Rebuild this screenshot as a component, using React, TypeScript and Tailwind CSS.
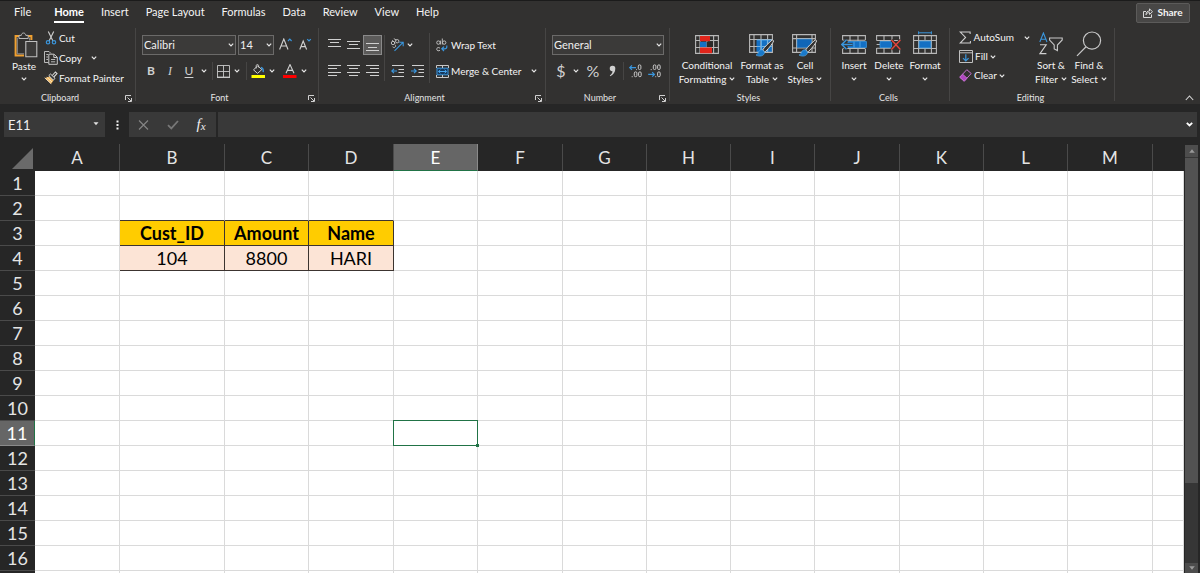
import type { ReactNode } from "react";
import clsx from "clsx";

const tabs = ["File", "Home", "Insert", "Page Layout", "Formulas", "Data", "Review", "View", "Help"];

const columns = [
  { name: "A", width: "w-[85px]" },
  { name: "B", width: "w-[105px]" },
  { name: "C", width: "w-[84px]" },
  { name: "D", width: "w-[85px]" },
  { name: "E", width: "w-[84px]" },
  { name: "F", width: "w-[85px]" },
  { name: "G", width: "w-[84px]" },
  { name: "H", width: "w-[84px]" },
  { name: "I", width: "w-[84px]" },
  { name: "J", width: "w-[85px]" },
  { name: "K", width: "w-[84px]" },
  { name: "L", width: "w-[84px]" },
  { name: "M", width: "w-[85px]" },
  { name: "", width: "" },
];

const rows = Array.from({ length: 16 }, (_, i) => i + 1);

const cells: Record<string, string> = {
  B3: "Cust_ID",
  C3: "Amount",
  D3: "Name",
  B4: "104",
  C4: "8800",
  D4: "HARI",
};

const activeCol = "E";
const activeRow = 11;

/* ---------- small pieces ---------- */

function Chevron() {
  return (
    <svg width="6" height="4" viewBox="0 0 6 4" fill="none" stroke="#e6e6e6" strokeWidth="1.2" className="shrink-0">
      <path d="M0.8 0.6 3 2.9 5.2 0.6" />
    </svg>
  );
}

function Sep({ className }: { className?: string }) {
  return <span className={clsx("w-px shrink-0 bg-[#464544]", className)} />;
}

function Tool({ label, className, children }: { label: string; className?: string; children: ReactNode }) {
  return (
    <button aria-label={label} className={clsx("flex h-5 shrink-0 items-center justify-center", className)}>
      {children}
    </button>
  );
}

function Group({ name, width, launcher, children }: { name: string; width: string; launcher?: boolean; children: ReactNode }) {
  return (
    <section aria-label={name} className={clsx("flex h-[73px] shrink-0 flex-col border-r border-[#464544]", width)}>
      <div className="flex flex-1">{children}</div>
      <div className="flex h-[6px] items-center pr-[3px] text-[9px] leading-3 text-[#e4e4e4]">
        <span className="flex-1 text-center">{name}</span>
        {launcher && (
          <button aria-label={`${name} settings`} className="flex w-3 justify-end">
            <svg width="7" height="7" viewBox="0 0 7 7" fill="none" stroke="#d0d0d0" strokeWidth="1">
              <path d="M0.5 5V0.5H6M2.5 2.5 6 6M6.5 3V6.5H3" />
            </svg>
          </button>
        )}
      </div>
    </section>
  );
}

function Dropdown({ label, value, className }: { label: string; value: string; className: string }) {
  return (
    <div className={clsx("relative h-5 shrink-0", className)}>
      <select
        aria-label={label}
        className="block h-5 w-full appearance-none border border-[#6b6a69] bg-[#3b3a39] pl-px text-[11px] leading-4 text-[#f0f0f0]"
      >
        <option>{value}</option>
      </select>
      <span className="pointer-events-none absolute inset-y-0 right-[2px] flex items-center">
        <Chevron />
      </span>
    </div>
  );
}

function BigButton({ icon, lines, width }: { icon: ReactNode; lines: string[]; width: string }) {
  return (
    <button className={clsx("flex shrink-0 flex-col items-center pt-[2px] text-[10px] leading-[14px] whitespace-nowrap", width)}>
      <span className="flex h-7 items-center">{icon}</span>
      <span>{lines[0]}</span>
      <span className="flex h-[14px] items-center gap-[3px]">
        {lines[1]}
        <Chevron />
      </span>
    </button>
  );
}

/* ---------- icons ---------- */

function PasteIcon() {
  return (
    <svg width="24" height="26" viewBox="0 0 24 26" fill="none" className="ml-[3px]">
      <path d="M5 4H1.6V23.6H10" stroke="#f0a030" strokeWidth="2" />
      <path d="M14 4H17.4V8" stroke="#f0a030" strokeWidth="2" />
      <path d="M3.3 5.6V21.8H10M15.6 5.6V8.5" stroke="#a8a8a8" strokeWidth="0.8" />
      <path d="M5 6.5V3.4H7.3C7.5 0.2 11.5 0.2 11.8 3.4H14.2V6.5Z" fill="#323130" stroke="#b8b8b8" />
      <path d="M11.8 9.5H22.8V24.8H11.8Z" fill="#3b3a39" stroke="#c0c0c0" strokeWidth="1.1" />
    </svg>
  );
}

function CutIcon() {
  return (
    <svg width="14" height="14" viewBox="0 0 14 14" fill="none">
      <path d="M4.3 0.5 8.8 9.8M9.7 0.5 5.2 9.8" stroke="#d0d0d0" strokeWidth="1.1" />
      <circle cx="4" cy="11.3" r="1.7" stroke="#3a96dd" strokeWidth="1.2" />
      <circle cx="10" cy="11.3" r="1.7" stroke="#3a96dd" strokeWidth="1.2" />
    </svg>
  );
}

function CopyIcon() {
  return (
    <svg width="14" height="14" viewBox="0 0 14 14" fill="none" stroke="#c8c8c8">
      <path d="M4.5 11.5H0.5V0.5H5L7 2.5M2.3 3.5H4M2.3 6H4M2.3 8.5H4" strokeWidth="0.9" />
      <path d="M4.8 3.2H10L13.3 6.2V13.3H4.8ZM9.8 3.5V6.5H13" />
      <path d="M7 8.5H11.2M7 10.8H11.2" strokeWidth="0.9" />
    </svg>
  );
}

function PainterIcon() {
  return (
    <svg width="14" height="14" viewBox="0 0 14 14" fill="none">
      <path d="M1 7 5.5 5.5 9.5 9.5 7 13Z" fill="#f0b860" />
      <path d="M0.7 6.8 7.2 12.8M2.8 6.2 8 11" stroke="#fff0d8" strokeWidth="0.8" />
      <path d="M4.8 4.6 6.5 3 11 7.3 9.4 9.1Z" fill="#323130" stroke="#d8d8d8" />
      <path d="M8.3 4.5 11.4 1 13 2.6 9.8 6" stroke="#d8d8d8" strokeWidth="1.1" />
    </svg>
  );
}

function LinesIcon({ lines }: { lines: [number, number, number][] }) {
  return (
    <svg width="13" height="14" viewBox="0 0 13 14" stroke="#d0d0d0" strokeWidth="1">
      {lines.map(([x1, x2, y]) => (
        <path key={y} d={`M${x1} ${y}H${x2}`} />
      ))}
    </svg>
  );
}

function BordersIcon() {
  return (
    <svg width="13" height="13" viewBox="0 0 13 13" fill="none" stroke="#c8c8c8">
      <path d="M0.5 12.5V0.5H12.5V12.5M6.5 0.5V12M0.5 6.5H12.5" strokeWidth="0.9" />
      <path d="M0 12.3H13" strokeWidth="1.4" />
    </svg>
  );
}

function BucketIcon() {
  return (
    <svg width="14" height="14" viewBox="0 0 14 14" fill="none">
      <path d="M2.5 5.8 6.8 1.8 10.8 5.6 6.5 9.4Z" stroke="#d0d0d0" />
      <path d="M5.2 4.5V1.6C5.2 0.2 7.6 0.2 7.6 1.6V3.5" stroke="#d0d0d0" strokeWidth="0.9" />
      <path d="M10 3.5C12 4 12.5 5.5 12.2 8.2" stroke="#3a96dd" strokeWidth="1.4" />
      <path d="M0.5 11H14V14H0.5Z" fill="#ffff00" />
    </svg>
  );
}

function FontColorIcon() {
  return (
    <svg width="14" height="14" viewBox="0 0 14 14" fill="none">
      <path d="M3 9.3 7 0.6 11 9.3M4.5 6.4H9.5" stroke="#d0d0d0" strokeWidth="1.1" />
      <path d="M0 11H13.5V14H0Z" fill="#ff0000" />
    </svg>
  );
}

function FontSizeIcon({ grow }: { grow?: boolean }) {
  return grow ? (
    <svg width="13" height="14" viewBox="0 0 13 14" fill="none">
      <path d="M0.6 11.5 4.8 1 9 11.5M2 8H7.6" stroke="#d0d0d0" strokeWidth="1.1" />
      <path d="M9 3 10.8 1.1 12.6 3" stroke="#3a96dd" strokeWidth="1.2" />
    </svg>
  ) : (
    <svg width="13" height="14" viewBox="0 0 13 14" fill="none">
      <path d="M0.8 11.5 4.2 3 7.6 11.5M2 8.6H6.4" stroke="#d0d0d0" strokeWidth="1.1" />
      <path d="M8.2 1.1 10 3 11.8 1.1" stroke="#3a96dd" strokeWidth="1.2" />
    </svg>
  );
}

function OrientationIcon() {
  return (
    <svg width="15" height="14" viewBox="0 0 15 14" fill="none">
      <g stroke="#c8c8c8" strokeWidth="0.9">
        <circle cx="3" cy="5" r="1.7" />
        <path d="M2.2 2.2 5.3 5.2" />
        <circle cx="7.2" cy="3.2" r="1.7" />
        <path d="M3.8 0.6 6.2 2" />
        <path d="M2.6 8.8C4.4 10.6 6.6 8.6 5.2 6.8" />
      </g>
      <path d="M4.5 12.8 12.8 4.6M9.3 4.2H13.2V8.2" stroke="#3a96dd" strokeWidth="1.1" />
    </svg>
  );
}

function IndentIcon({ increase }: { increase?: boolean }) {
  return (
    <svg width="13" height="12" viewBox="0 0 13 12" fill="none">
      <path d="M1 0.5H13M7.5 4.5H13M7.5 7.5H13M1 11.5H13" stroke="#d0d0d0" />
      {increase ? (
        <path d="M0 6H5M3 3.8 5.2 6 3 8.2" stroke="#3a96dd" strokeWidth="1.2" />
      ) : (
        <path d="M6 6H0.8M3 3.8 0.8 6 3 8.2" stroke="#3a96dd" strokeWidth="1.2" />
      )}
    </svg>
  );
}

function WrapIcon() {
  return (
    <svg width="12" height="14" viewBox="0 0 12 14" fill="none">
      <g stroke="#c8c8c8" strokeWidth="0.9">
        <circle cx="2.4" cy="4.6" r="1.7" />
        <path d="M4.4 2.6V6.5M6.3 0.5V6.5M4 10.2C2.5 8.8 0.6 9.8 0.7 11.2 0.8 12.8 2.8 13.4 4 12.2" />
        <circle cx="8.2" cy="4.6" r="1.7" />
      </g>
      <path d="M10.8 7.5V9C10.8 10.3 9.8 10.8 8.5 10.8H6M8 8.6 5.8 10.8 8 13" stroke="#3a96dd" strokeWidth="1.2" />
    </svg>
  );
}

function MergeIcon() {
  return (
    <svg width="13" height="13" viewBox="0 0 13 13" fill="none">
      <path d="M1 3.2H12V9.8H1Z" fill="#17395c" stroke="#3a96dd" />
      <path d="M0.5 3V0.5H12.5V3M0.5 10V12.5H12.5V10M6.5 0.5V3M6.5 10V12.5" stroke="#c8c8c8" />
      <path d="M2.5 6.5H10.5M4.4 4.8 2.6 6.5 4.4 8.2M8.6 4.8 10.4 6.5 8.6 8.2" stroke="#4aa8f0" />
    </svg>
  );
}

function DecimalIcon({ increase }: { increase?: boolean }) {
  return (
    <svg width="14" height="14" viewBox="0 0 14 14" fill="none">
      <g stroke="#c8c8c8" strokeWidth="1">
        {increase ? (
          <>
            <rect x="9.3" y="0.9" width="2.6" height="4.6" rx="1.2" />
            <rect x="5.3" y="7.9" width="2.6" height="4.8" rx="1.2" />
            <rect x="9.6" y="7.9" width="2.6" height="4.8" rx="1.2" />
            <path d="M2.7 12.7H3.7M7.2 5.6H8" />
          </>
        ) : (
          <>
            <rect x="5.3" y="0.9" width="2.6" height="4.6" rx="1.2" />
            <rect x="9.6" y="0.9" width="2.6" height="4.6" rx="1.2" />
            <rect x="9.6" y="7.9" width="2.6" height="4.8" rx="1.2" />
            <path d="M2.7 5.6H3.7M7.3 12.7H8.2" />
          </>
        )}
      </g>
      {increase ? (
        <path d="M7 3.6H0.9M3 1.4 0.8 3.6 3 5.8" stroke="#3a96dd" strokeWidth="1.2" />
      ) : (
        <path d="M0.2 10.4H6.3M4.2 8.2 6.4 10.4 4.2 12.6" stroke="#3a96dd" strokeWidth="1.2" />
      )}
    </svg>
  );
}

function Grid() {
  return <path d="M0.6 0.6H23.4V18.4H0.6ZM0.6 5.5H23.4M0.6 12.5H23.4M5 0.6V18.4M12 0.6V18.4M18.6 0.6V18.4" stroke="#b8b8b8" strokeWidth="1.1" />;
}

function Brush() {
  return (
    <>
      <path d="M23.5 5.8C21 7.5 15 13.5 13.6 16L15.8 18C18 16.5 23.5 10 24.6 7Z" fill="#323130" stroke="#d8d8d8" />
      <path d="M13.2 15.8C10.5 15.6 9.6 17.5 9 19.2 8.5 20.4 7.8 20.7 7 21 10 23 15.4 22.4 15.6 18Z" fill="#1979ca" stroke="#5ab0f0" strokeWidth="0.6" />
    </>
  );
}

function ConditionalIcon() {
  return (
    <svg width="24" height="19" viewBox="0 0 24 19" fill="none">
      <Grid />
      <path d="M5 1H15V6.2H5ZM5 12.6H17V18.2H5Z" fill="#e1251b" />
      <path d="M5 6.8H11.5V12H5Z" fill="#1470c4" />
      <path d="M12 6.8H18V12H12Z" fill="#2b2a29" />
    </svg>
  );
}

function FormatTableIcon() {
  return (
    <svg width="26" height="23" viewBox="0 0 26 23" fill="none" className="mt-[3px]">
      <path d="M7.5 6H23V18.4H7.5Z" fill="#1470c4" />
      <Grid />
      <path d="M8 12.5H23M12.5 6V18M18.4 6V18M8 6H23" stroke="#5ab0f0" strokeWidth="0.8" />
      <Brush />
    </svg>
  );
}

function CellStylesIcon() {
  return (
    <svg width="26" height="23" viewBox="0 0 26 23" fill="none" className="mt-[3px]">
      <path d="M0.6 0.6H23.4V18.4H0.6ZM0.6 4.6H23.4M4.6 0.6V18.4M0.6 14H23M20 0.6V18.4" stroke="#b8b8b8" strokeWidth="1.1" />
      <path d="M5.2 5.2H19.4V13.4H5.2Z" fill="#1066b8" stroke="#3a96dd" strokeWidth="0.6" />
      <Brush />
    </svg>
  );
}

function InsertIcon() {
  return (
    <svg width="26" height="19" viewBox="0 0 26 19" fill="none">
      <path d="M1.6 5V0.6H24.4V5M1.6 14V18.4H24.4V14M9 0.6V6M17 0.6V6M9 13V18.4M17 13V18.4M1.6 5.3H24.4M1.6 13.5H24.4" stroke="#b8b8b8" strokeWidth="1.1" />
      <path d="M7 6.5H25.4V12.5H7Z" fill="#1470c4" stroke="#3a96dd" strokeWidth="0.8" />
      <path d="M13 6.5V12.5M19 6.5V12.5" stroke="#5ab0f0" strokeWidth="0.8" />
      <path d="M11.5 9.5H0.8M5.5 4.8 0.8 9.5 5.5 14.2" stroke="#323130" strokeWidth="3" />
      <path d="M11.5 9.5H0.8M5.5 4.8 0.8 9.5 5.5 14.2" stroke="#3a96dd" strokeWidth="1.4" />
    </svg>
  );
}

function DeleteIcon() {
  return (
    <svg width="26" height="19" viewBox="0 0 26 19" fill="none">
      <path d="M0.6 5.5V0.6H23.6V5.5M0.6 13V18.4H23.6V13M8 0.6V5.5M16 0.6V5.5M8 13.5V18.4M16 13.5V18.4M0.6 5.5H23.6M0.6 13.3H16" stroke="#b8b8b8" strokeWidth="1.1" />
      <path d="M0.6 9.5H4" stroke="#b8b8b8" />
      <path d="M4 6.5H15.5V12.5H4Z" fill="#1470c4" stroke="#3a96dd" strokeWidth="0.8" />
      <path d="M15.5 5 24.4 14.5M24.4 5 15.5 14.5" stroke="#323130" strokeWidth="3" />
      <path d="M15.5 5 24.4 14.5M24.4 5 15.5 14.5" stroke="#e8453c" strokeWidth="1.3" />
    </svg>
  );
}

function FormatIcon() {
  return (
    <svg width="24" height="23" viewBox="0 0 24 23" fill="none" className="mb-[3px]">
      <path d="M5.6 1.8H18.4M5.6 0.3V3.3M18.4 0.3V3.3" stroke="#3a96dd" />
      <path d="M0.6 4.6H23.4V22.4H0.6ZM0.6 9.5H23.4M0.6 17.5H23.4M5.6 4.6V22.4M18.4 4.6V22.4M12 4.6V9M12 18V22.4" stroke="#b8b8b8" strokeWidth="1.1" />
      <path d="M6.2 10.2H17.8V16.8H6.2Z" fill="#1470c4" stroke="#3a96dd" />
    </svg>
  );
}

function SumIcon() {
  return (
    <svg width="13" height="13" viewBox="0 0 13 13" fill="none" stroke="#d0d0d0" strokeWidth="1.1">
      <path d="M11.5 3V0.8H1.2L6.8 6.4 1.2 12.2H11.8V10" />
    </svg>
  );
}

function FillIcon() {
  return (
    <svg width="14" height="13" viewBox="0 0 14 13" fill="none">
      <path d="M0.5 0.5H13.5V12.5H0.5ZM0.5 2.8H13.5" stroke="#c0c0c0" />
      <path d="M6.8 4.2V11M4 8.2 6.8 11 9.6 8.2" stroke="#3a96dd" strokeWidth="1.2" />
    </svg>
  );
}

function ClearIcon() {
  return (
    <svg width="13" height="13" viewBox="0 0 13 13" fill="none" stroke="#c26fcd">
      <path d="M7.8 0.7 12.2 4.5 5.2 12.2 0.8 8.2Z" />
      <path d="M3.6 5.2 8 9.2 5.2 12.2 0.8 8.2Z" fill="#b146c2" />
    </svg>
  );
}

function SortIcon() {
  return (
    <svg width="24" height="24" viewBox="0 0 24 24" fill="none">
      <path d="M0.8 10 4.4 1 8 10M2 7.2H6.8" stroke="#3a96dd" strokeWidth="1.1" />
      <path d="M1 12.8H7.2L1 21.6H7.4" stroke="#d0d0d0" strokeWidth="1.1" />
      <path d="M10.6 6H23.2V8L18.4 13V18.6L15.2 17V13L10.6 8Z" stroke="#c8c8c8" strokeWidth="1.1" />
    </svg>
  );
}

function FindIcon() {
  return (
    <svg width="26" height="26" viewBox="0 0 26 26" fill="none" stroke="#c8c8c8" strokeWidth="1.2">
      <circle cx="16" cy="9.6" r="8.6" />
      <path d="M9.8 16 1 24.8" />
    </svg>
  );
}

/* ---------- ribbon ---------- */

function Ribbon() {
  return (
    <div className="flex items-start pt-[4px]">
      <Group name="Clipboard" width="w-[136px]" launcher>
        <button className="flex w-10 flex-col items-center pt-1 pl-2 text-[10px] leading-[14px]">
          <PasteIcon />
          <span className="pt-px">Paste</span>
          <span className="flex h-3 items-center">
            <Chevron />
          </span>
        </button>
        <div className="flex flex-col pl-1 text-[10px] leading-5">
          <button className="flex h-5 items-center gap-px">
            <CutIcon /> Cut
          </button>
          <button className="flex h-5 items-center gap-px">
            <CopyIcon /> Copy
            <span className="pl-2">
              <Chevron />
            </span>
          </button>
          <button className="flex h-5 items-center gap-px whitespace-nowrap">
            <PainterIcon /> Format Painter
          </button>
        </div>
      </Group>

      <Group name="Font" width="w-[183px]" launcher>
        <div className="flex flex-col gap-[6px] pt-[7px] pl-[6px]">
          <div className="flex items-center">
            <Dropdown label="Font" value="Calibri" className="mr-[2px] w-[94px]" />
            <Dropdown label="Font size" value="14" className="w-9" />
            <Tool label="Increase font size" className="w-[22px]">
              <FontSizeIcon grow />
            </Tool>
            <Tool label="Decrease font size" className="w-[18px]">
              <FontSizeIcon />
            </Tool>
          </div>
          <div className="flex items-center text-[12px] text-[#d0d0d0]">
            <Tool label="Bold" className="w-[18px] font-bold">B</Tool>
            <Tool label="Italic" className="w-5 font-['Liberation_Serif'] italic">I</Tool>
            <Tool label="Underline" className="w-[18px] underline underline-offset-2">U</Tool>
            <Tool label="Underline style" className="w-3">
              <Chevron />
            </Tool>
            <Sep className="mx-[2px] h-[18px]" />
            <Tool label="Borders" className="w-4">
              <BordersIcon />
            </Tool>
            <Tool label="Border style" className="w-3">
              <Chevron />
            </Tool>
            <Sep className="mx-[3px] h-[18px]" />
            <Tool label="Fill colour" className="w-4">
              <BucketIcon />
            </Tool>
            <Tool label="Fill colour list" className="w-3">
              <Chevron />
            </Tool>
            <Tool label="Font colour" className="ml-1 w-4">
              <FontColorIcon />
            </Tool>
            <Tool label="Font colour list" className="w-3">
              <Chevron />
            </Tool>
          </div>
        </div>
      </Group>

      <Group name="Alignment" width="w-[227px]" launcher>
        <div className="flex flex-col gap-[6px] pt-[7px] pl-[5px]">
          <div className="flex">
            <Tool label="Top align" className="w-5">
              <LinesIcon lines={[[0, 13, 1.5], [2, 11, 4.5], [0, 13, 8.5]]} />
            </Tool>
            <Tool label="Middle align" className="w-[19px]">
              <LinesIcon lines={[[0, 13, 3.5], [2, 11, 6.5], [0, 13, 10.5]]} />
            </Tool>
            <Tool label="Bottom align" className="w-[19px] border border-[#8a8a8a] bg-[#5c5b5a]">
              <LinesIcon lines={[[0, 13, 5.5], [2, 11, 9.5], [0, 13, 12.5]]} />
            </Tool>
          </div>
          <div className="flex">
            <Tool label="Align left" className="w-5">
              <LinesIcon lines={[[0, 13, 1.5], [0, 9, 4.5], [0, 13, 8.5], [0, 9, 11.5]]} />
            </Tool>
            <Tool label="Centre" className="w-[19px]">
              <LinesIcon lines={[[0, 13, 1.5], [2, 11, 4.5], [0, 13, 8.5], [2, 11, 11.5]]} />
            </Tool>
            <Tool label="Align right" className="w-[19px]">
              <LinesIcon lines={[[0, 13, 1.5], [4, 13, 4.5], [0, 13, 8.5], [4, 13, 11.5]]} />
            </Tool>
          </div>
        </div>
        <Sep className="mt-[7px] mr-1 ml-[2px] h-[46px]" />
        <div className="flex flex-col gap-[6px] pt-[7px]">
          <div className="flex">
            <Tool label="Orientation" className="w-4">
              <OrientationIcon />
            </Tool>
            <Tool label="Orientation list" className="w-[10px]">
              <Chevron />
            </Tool>
          </div>
          <div className="flex gap-1">
            <Tool label="Decrease indent" className="w-4">
              <IndentIcon />
            </Tool>
            <Tool label="Increase indent" className="w-4">
              <IndentIcon increase />
            </Tool>
          </div>
        </div>
        <Sep className="mt-[5px] mr-[6px] ml-1 h-[50px]" />
        <div className="flex flex-col gap-[6px] pt-[7px] text-[10px] whitespace-nowrap">
          <button className="flex h-5 items-center gap-[3px]">
            <WrapIcon /> Wrap Text
          </button>
          <button className="flex h-5 items-center gap-[2px]">
            <MergeIcon /> Merge &amp; Center
            <span className="pl-2">
              <Chevron />
            </span>
          </button>
        </div>
      </Group>

      <Group name="Number" width="w-[124px]" launcher>
        <div className="flex flex-col gap-[6px] pt-[7px] pl-[6px]">
          <Dropdown label="Number format" value="General" className="w-[112px]" />
          <div className="flex items-center text-[16px] text-[#d0d0d0]">
            <Tool label="Accounting format" className="w-[18px]">$</Tool>
            <Tool label="Currency list" className="w-3">
              <Chevron />
            </Tool>
            <Tool label="Percent style" className="w-[22px]">%</Tool>
            <Tool label="Comma style" className="w-4">
              <svg width="7" height="12" viewBox="0 0 7 12" fill="#d0d0d0">
                <path d="M3.4 0.8A2.8 2.8 0 0 1 6.3 3.8C6.3 7.4 4.2 9.8 1.2 11.2L0.8 10.4C2.6 9.2 3.4 7.8 3.5 6.2A2.7 2.7 0 1 1 3.4 0.8Z" />
              </svg>
            </Tool>
            <Sep className="mx-[3px] h-[18px]" />
            <Tool label="Increase decimal" className="w-[18px]">
              <DecimalIcon increase />
            </Tool>
            <Tool label="Decrease decimal" className="w-[19px]">
              <DecimalIcon />
            </Tool>
          </div>
        </div>
      </Group>

      <Group name="Styles" width="w-[161px]">
        <BigButton icon={<ConditionalIcon />} lines={["Conditional", "Formatting"]} width="ml-[7px] w-[60px]" />
        <BigButton icon={<FormatTableIcon />} lines={["Format as", "Table"]} width="w-[50px]" />
        <BigButton icon={<CellStylesIcon />} lines={["Cell", "Styles"]} width="w-9" />
      </Group>

      <Group name="Cells" width="w-[119px]">
        <BigButton icon={<InsertIcon />} lines={["Insert", ""]} width="ml-[6px] w-[34px]" />
        <BigButton icon={<DeleteIcon />} lines={["Delete", ""]} width="w-9" />
        <BigButton icon={<FormatIcon />} lines={["Format", ""]} width="w-9" />
      </Group>

      <Group name="Editing" width="w-[165px]">
        <div className="flex w-20 flex-col pl-[9px] text-[10px]">
          <button className="flex h-[19px] items-center gap-[2px]">
            <SumIcon /> AutoSum
            <span className="pl-2">
              <Chevron />
            </span>
          </button>
          <button className="flex h-[19px] items-center gap-[2px]">
            <FillIcon /> Fill <Chevron />
          </button>
          <button className="flex h-[19px] items-center gap-[2px]">
            <ClearIcon /> Clear <Chevron />
          </button>
        </div>
        <BigButton icon={<SortIcon />} lines={["Sort &", "Filter"]} width="ml-[2px] w-[38px]" />
        <BigButton icon={<FindIcon />} lines={["Find &", "Select"]} width="w-[38px]" />
      </Group>

      <button aria-label="Collapse the ribbon" className="mt-[67px] mr-[6px] ml-auto">
        <svg width="9" height="6" viewBox="0 0 9 6" fill="none" stroke="#d8d8d8" strokeWidth="1.1">
          <path d="M0.8 5 4.5 1 8.2 5" />
        </svg>
      </button>
    </div>
  );
}

function FormulaBar() {
  return (
    <div className="flex h-[25px] items-stretch">
      <div className="relative ml-1 w-[101px] bg-[#393939]">
        <input
          aria-label="Name box"
          defaultValue="E11"
          className="h-full w-full bg-transparent pl-1 text-[13px] text-[#f0f0f0] outline-none"
        />
        <svg width="6" height="4" viewBox="0 0 6 4" fill="#e0e0e0" className="pointer-events-none absolute top-[10px] right-[6px]">
          <path d="M0.5 0.3H5.5L3 3.3Z" />
        </svg>
      </div>
      <div className="flex w-6 items-center justify-center">
        <svg width="3" height="10" viewBox="0 0 3 10" fill="#f0f0f0">
          <path d="M0.5 0.5H2.5V2.5H0.5ZM0.5 4H2.5V6H0.5ZM0.5 7.5H2.5V9.5H0.5Z" />
        </svg>
      </div>
      <div className="mr-[2px] flex w-[87px] items-center bg-[#393939]">
        <Tool label="Cancel" className="w-7">
          <svg width="11" height="10" viewBox="0 0 11 10" fill="none" stroke="#858585" strokeWidth="1.1">
            <path d="M1 0.5 10 9.5M10 0.5 1 9.5" />
          </svg>
        </Tool>
        <Tool label="Enter" className="w-[31px]">
          <svg width="12" height="10" viewBox="0 0 12 10" fill="none" stroke="#777777" strokeWidth="1.8">
            <path d="M1 5.2 4.3 8.4 11 1" />
          </svg>
        </Tool>
        <Tool label="Insert function" className="w-[26px] font-['Liberation_Serif'] text-[15px] text-[#f0f0f0] italic">
          f<span className="pt-1 text-[11px]">x</span>
        </Tool>
      </div>
      <div className="relative mr-[3px] min-w-0 flex-1 bg-[#393939]">
        <input aria-label="Formula bar" className="h-full w-full bg-transparent px-2 text-[13px] text-white outline-none" />
        <svg
          width="7"
          height="5"
          viewBox="0 0 7 5"
          fill="none"
          stroke="#ffffff"
          strokeWidth="1.8"
          className="pointer-events-none absolute top-[10px] right-1"
        >
          <path d="M0.8 0.8 3.5 3.4 6.2 0.8" />
        </svg>
      </div>
    </div>
  );
}

/* ---------- sheet ---------- */

function Cell({ col, row }: { col: string; row: number }) {
  const value = cells[col + row];
  const active = col === activeCol && row === activeRow;
  const inTable = ["B", "C", "D"].includes(col);
  return (
    <td
      className={clsx(
        "h-[25px] border-r border-b p-0 text-center leading-6",
        active && "relative",
        value && "border-[#3c3430] text-black",
        value && row === 3 && "bg-[#ffcc00] font-bold",
        value && row === 4 && "bg-[#fce4d6]",
        !value && (inTable && row === 2 ? "border-r-[#d9d9d9] border-b-[#3c3430]" : "border-r-[#dadada] border-b-[#dadada]"),
        !value && col === "A" && (row === 3 || row === 4) && "border-r-[#3c3430]"
      )}
    >
      {value}
      {active && (
        <span className="absolute -inset-px z-10 border border-[#217346]">
          <span className="absolute -right-[2px] -bottom-[2px] size-[3px] bg-[#217346]" />
        </span>
      )}
    </td>
  );
}

function Sheet() {
  return (
    <div className="flex min-h-0 flex-1 pt-[7px]">
      <div className="min-w-0 flex-1 overflow-hidden">
        <table className="w-full table-fixed border-separate border-spacing-0 bg-white font-['Lato','Liberation_Sans',sans-serif] text-[18px]">
          <thead>
            <tr className="bg-[#262626] text-[#e4e4e4]">
              <th className="h-[27px] w-[35px] p-0 align-bottom">
                <svg width="22" height="21" viewBox="0 0 22 21" fill="#6a6a6a" className="mb-[2px] ml-3">
                  <path d="M21 0V21H0Z" />
                </svg>
              </th>
              {columns.map((c) => (
                <th
                  key={c.name}
                  scope="col"
                  className={clsx(
                    "h-[27px] border-r p-0 pt-px text-[17px] leading-6 font-normal",
                    c.width,
                    c.name === activeCol
                      ? "border-r-[#8a8a8a] border-b border-b-[#217346] bg-[#666666] text-white"
                      : "border-r-[#4a4a4a] last:border-r-0"
                  )}
                >
                  {c.name}
                </th>
              ))}
            </tr>
          </thead>
          <tbody>
            {rows.map((row) => (
              <tr key={row}>
                <th
                  scope="row"
                  className={clsx(
                    "h-[25px] border-b p-0 leading-6 font-normal",
                    row === activeRow
                      ? "border-r border-r-[#217346] border-b-[#8a8a8a] bg-[#666666] text-white"
                      : "border-b-[#4a4a4a] bg-[#262626] text-[#e4e4e4]"
                  )}
                >
                  {row}
                </th>
                {columns.map((c) => (
                  <Cell key={c.name} col={c.name} row={row} />
                ))}
              </tr>
            ))}
            <tr>
              <th className="h-[25px] bg-[#262626] p-0" />
              {columns.map((c) => (
                <Cell key={c.name} col={c.name} row={17} />
              ))}
            </tr>
          </tbody>
        </table>
      </div>
      <div className="ml-px flex w-[15px] flex-col pr-[2px]">
        <button aria-label="Scroll up" className="mt-px flex h-3 items-center justify-center bg-[#4d4d4d]">
          <svg width="6" height="4" viewBox="0 0 6 4" fill="#9a9a9a">
            <path d="M3 0.3 5.8 3.7H0.2Z" />
          </svg>
        </button>
        <div className="flex flex-1 flex-col bg-[#363636]">
          <div className="mt-px h-4/5 bg-[#525252]" />
        </div>
        <button aria-label="Scroll down" className="flex h-[10px] items-center justify-center bg-[#4d4d4d]">
          <svg width="6" height="4" viewBox="0 0 6 4" fill="#9a9a9a">
            <path d="M0.2 0.3H5.8L3 3.7Z" />
          </svg>
        </button>
      </div>
    </div>
  );
}

export default function App() {
  return (
    <div className="flex h-screen min-w-[1200px] flex-col overflow-hidden bg-[#262626] font-['Lato','Liberation_Sans',sans-serif] text-[#f4f4f4]">
      <header className="border-t border-[#1b1b1b] bg-[#323130] pb-[3px]">
        <div className="flex h-[23px] items-center justify-between pr-[10px] pl-[14px]">
          <nav className="flex items-center gap-[17px] text-[11px] leading-5">
            {tabs.map((tab) => (
              <button
                key={tab}
                className={clsx(
                  "h-[21px] border-b-2 whitespace-nowrap first:mr-[6px]",
                  tab === "Home" ? "border-white font-bold text-white" : "border-transparent"
                )}
              >
                {tab}
              </button>
            ))}
          </nav>
          <button className="flex h-5 w-[54px] items-center justify-center gap-1 rounded-[2px] border border-[#5c5b5a] bg-[#484746] text-[10px] font-bold">
            <svg width="10" height="10" viewBox="0 0 10 10" fill="none" stroke="#d8d8d8" strokeWidth="1">
              <path d="M3 3.5H0.5V9.5H8.5V6.5M3 6.8C3 4 4.5 3 6.5 3V0.9L9.5 3.7 6.5 6.4V4.6C5 4.6 4 5 3 6.8Z" />
            </svg>
            Share
          </button>
        </div>
        <Ribbon />
      </header>
      <div className="pt-2">
        <FormulaBar />
      </div>
      <Sheet />
    </div>
  );
}
